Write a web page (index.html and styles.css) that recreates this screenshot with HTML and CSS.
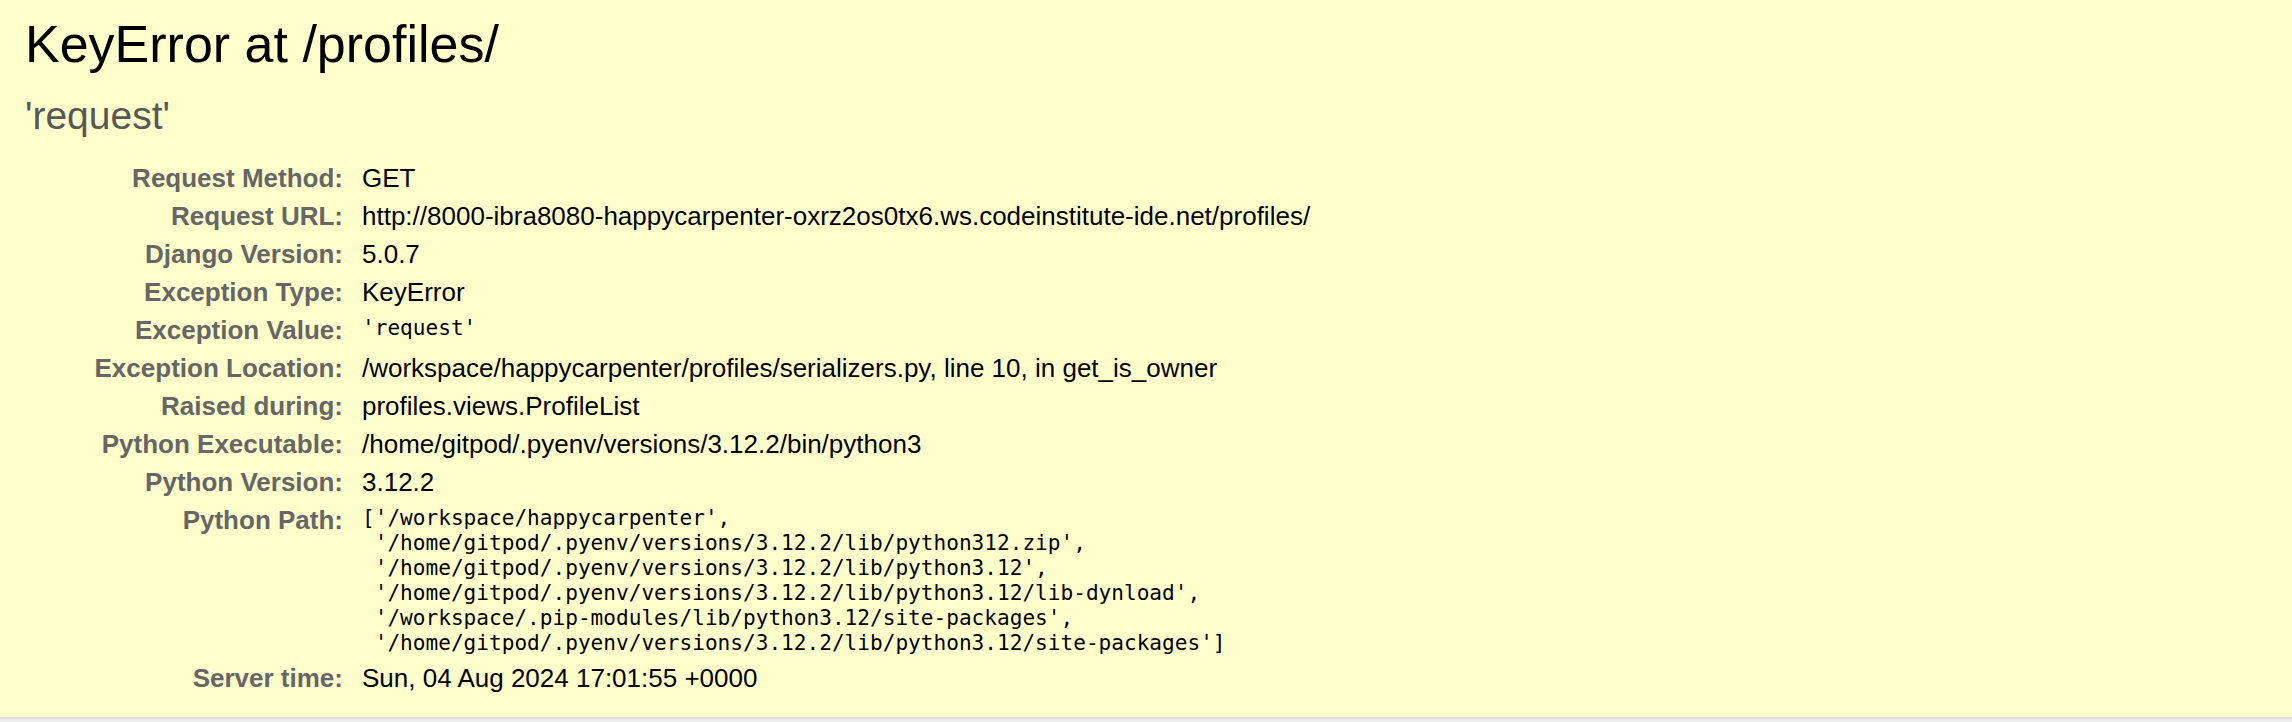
FILE: index.html
```html
<!DOCTYPE html>
<html lang="en">
<head>
<meta charset="utf-8">
<title>KeyError at /profiles/</title>
<link rel="stylesheet" href="styles.css">
</head>
<body>
<header class="summary">
  <h1 class="title">KeyError at /profiles/</h1>
  <pre class="exception-value">'request'</pre>
  <table class="meta">
    <tbody>
      <tr><th>Request Method:</th><td>GET</td></tr>
      <tr><th>Request URL:</th><td>http://8000-ibra8080-happycarpenter-oxrz2os0tx6.ws.codeinstitute-ide.net/profiles/</td></tr>
      <tr><th>Django Version:</th><td>5.0.7</td></tr>
      <tr><th>Exception Type:</th><td>KeyError</td></tr>
      <tr><th>Exception Value:</th><td><pre class="mono">'request'</pre></td></tr>
      <tr><th>Exception Location:</th><td><span class="fname">/workspace/happycarpenter/profiles/serializers.py</span>, line 10, in get_is_owner</td></tr>
      <tr><th>Raised during:</th><td>profiles.views.ProfileList</td></tr>
      <tr><th>Python Executable:</th><td>/home/gitpod/.pyenv/versions/3.12.2/bin/python3</td></tr>
      <tr><th>Python Version:</th><td>3.12.2</td></tr>
      <tr><th>Python Path:</th><td><pre class="mono">['/workspace/happycarpenter',
 '/home/gitpod/.pyenv/versions/3.12.2/lib/python312.zip',
 '/home/gitpod/.pyenv/versions/3.12.2/lib/python3.12',
 '/home/gitpod/.pyenv/versions/3.12.2/lib/python3.12/lib-dynload',
 '/workspace/.pip-modules/lib/python3.12/site-packages',
 '/home/gitpod/.pyenv/versions/3.12.2/lib/python3.12/site-packages']</pre></td></tr>
      <tr><th>Server time:</th><td>Sun, 04 Aug 2024 17:01:55 +0000</td></tr>
    </tbody>
  </table>
</header>
<main class="traceback"></main>
</body>
</html>
```
FILE: styles.css
```css
html, body {
  margin: 0;
  padding: 0;
}
body {
  background: #eee;
  color: #000;
  font-family: "Liberation Sans", Arial, Helvetica, sans-serif;
  font-size: 26px;
}
.summary {
  display: block;
  background: #ffc;
  padding: 20px 25px 20px 25px;
  border-bottom: 2px solid #ddd;
}
.title {
  margin: 0;
  font-weight: normal;
  font-size: 52px;
  line-height: 48px;
}
.exception-value {
  margin: 26px 0 21px 0;
  font-family: "Liberation Sans", Arial, Helvetica, sans-serif;
  font-size: 39px;
  line-height: 44px;
  color: #575757;
  white-space: pre-wrap;
}
.meta {
  border: none;
  border-collapse: collapse;
  background: transparent;
  width: 100%;
}
.meta th,
.meta td {
  vertical-align: top;
  padding: 4px 6px;
  line-height: 30px;
  font-size: 26px;
}
.meta th {
  width: 12em;
  text-align: right;
  color: #666;
  font-weight: bold;
  padding-right: 13px;
}
.meta td {
  text-align: left;
  color: #000;
}
.mono {
  margin: 0;
  font-family: "DejaVu Sans Mono", monospace;
  font-size: 21.1px;
  line-height: 25px;
  white-space: pre-wrap;
  word-break: break-word;
}
.traceback {
  display: block;
  background: #eee;
  min-height: 10px;
}
```
